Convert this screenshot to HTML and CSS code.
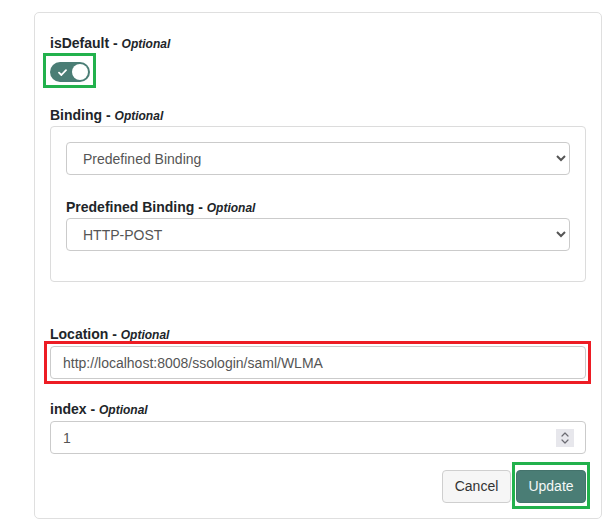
FILE: index.html
```html
<!DOCTYPE html>
<html lang="en">
<head>
<meta charset="utf-8">
<title>Edit endpoint</title>
<link rel="stylesheet" href="styles.css">
</head>
<body>
<div class="page">
  <form class="card">
    <div class="group group-default">
      <label class="field-label">isDefault - <em class="opt">Optional</em></label>
      <span class="mark mark-green mark-switch">
        <span class="switch" role="switch" aria-checked="true">
          <svg class="switch-check" width="9" height="7" viewBox="0 0 9 7"><path d="M1 3.6 L3.4 6 L8 1.2" fill="none" stroke="#fff" stroke-width="1.8" stroke-linecap="round" stroke-linejoin="round"/></svg>
          <span class="switch-knob"></span>
        </span>
      </span>
    </div>

    <div class="group group-binding">
      <label class="field-label label-flush">Binding - <em class="opt">Optional</em></label>
      <div class="subgroup">
        <select class="control">
          <option>Predefined Binding</option>
        </select>
        <div class="inner-group">
          <label class="inner-label">Predefined Binding - <em class="opt">Optional</em></label>
          <select class="control">
            <option>HTTP-POST</option>
          </select>
        </div>
      </div>
    </div>

    <div class="group group-location">
      <label class="field-label">Location - <em class="opt">Optional</em></label>
      <div class="mark mark-red mark-location">
        <input class="control" type="text" value="http://localhost:8008/ssologin/saml/WLMA">
      </div>
    </div>

    <div class="group group-index">
      <label class="field-label">index - <em class="opt">Optional</em></label>
      <div class="number-field">
        <input class="number-input" type="text" value="1">
        <span class="spinner">
          <svg width="10" height="14" viewBox="0 0 10 14"><path d="M2 5 L5 2 L8 5 M2 9 L5 12 L8 9" fill="none" stroke="#6b6b72" stroke-width="1.2" stroke-linecap="round" stroke-linejoin="round"/></svg>
        </span>
      </div>
    </div>

    <div class="actions">
      <button type="button" class="btn btn-cancel">Cancel</button>
      <span class="mark mark-green mark-update">
        <button type="button" class="btn btn-primary">Update</button>
      </span>
    </div>
  </form>
</div>
</body>
</html>
```

FILE: styles.css
```css
* {
  box-sizing: border-box;
}

body {
  margin: 0;
  background: #fff;
  font-family: "Liberation Sans", Arial, sans-serif;
  color: #212529;
}

.page {
  padding: 12px 0 0 34px;
}

.card {
  width: 568px;
  border: 1px solid #dfdfdf;
  border-radius: 5px;
  padding: 19px 15px 15px;
}

.group {
  display: flex;
  flex-direction: column;
  align-items: stretch;
}

.group-default {
  align-items: flex-start;
}

.group-binding {
  margin-top: 22px;
}

.group-location {
  margin-top: 41px;
}

.group-index {
  margin-top: 19px;
}

.field-label {
  display: block;
  font-size: 14px;
  font-weight: bold;
  line-height: 22px;
  margin-bottom: 1px;
  color: #212529;
}

.label-flush,
.group-default .field-label {
  margin-bottom: 0;
}

.opt {
  font-size: 12px;
  font-style: italic;
  line-height: 1;
}

/* annotation frames drawn around highlighted controls */
.mark {
  position: relative;
}

.mark::after {
  content: "";
  position: absolute;
  border: 3px solid;
  pointer-events: none;
}

.mark-green::after {
  border-color: #22b14c;
}

.mark-red::after {
  border-color: #ed1c24;
}

.mark-switch {
  display: block;
  margin-top: 8px;
}

.mark-switch::after {
  top: -9px;
  left: -7px;
  right: -6px;
  bottom: -6px;
}

.mark-location {
  display: block;
}

.mark-location::after {
  top: -5px;
  left: -6px;
  right: -5px;
  bottom: -5px;
}

.mark-update {
  display: block;
}

.mark-update::after {
  top: -8px;
  left: -4px;
  right: -4px;
  bottom: -6px;
}

/* toggle switch */
.switch {
  display: flex;
  align-items: center;
  justify-content: space-between;
  width: 40px;
  height: 20px;
  border-radius: 10px;
  background: #4a7d75;
  padding: 0 2px 0 8px;
}

.switch-check {
  display: block;
}

.switch-knob {
  width: 16px;
  height: 16px;
  border-radius: 50%;
  background: #fff;
}

/* nested binding box */
.subgroup {
  border: 1px solid #dcdcdc;
  border-radius: 4px;
  padding: 15px 15px 30px;
}

.inner-group {
  margin-top: 22px;
  display: flex;
  flex-direction: column;
}

.inner-label {
  font-size: 14px;
  font-weight: bold;
  line-height: 21px;
  color: #212529;
}

.control {
  display: block;
  width: 100%;
  height: 33px;
  border: 1px solid #cbcbcb;
  border-radius: 4px;
  padding: 0 12px;
  font-family: "Liberation Sans", Arial, sans-serif;
  font-size: 14px;
  color: #555;
  background: #fff;
}

.number-field {
  display: flex;
  align-items: center;
  height: 33px;
  border: 1px solid #cbcbcb;
  border-radius: 4px;
  padding: 0 11px 0 12px;
  background: #fff;
}

.number-input {
  flex: 1;
  min-width: 0;
  border: 0;
  padding: 0;
  outline: none;
  font-family: "Liberation Sans", Arial, sans-serif;
  font-size: 14px;
  color: #555;
  background: transparent;
}

.spinner {
  display: flex;
  align-items: center;
  justify-content: center;
  width: 18px;
  height: 18px;
  background: #e7e7ec;
}

/* footer buttons */
.actions {
  display: flex;
  justify-content: flex-end;
  gap: 5px;
  margin-top: 16px;
}

.btn {
  display: block;
  height: 33px;
  padding: 0;
  border-radius: 4px;
  font-family: "Liberation Sans", Arial, sans-serif;
  font-size: 14px;
  line-height: 31px;
  text-align: center;
}

.btn-cancel {
  width: 69px;
  background: #f6f6f6;
  border: 1px solid #cfcfcf;
  color: #333;
}

.btn-primary {
  width: 70px;
  background: #4a7d75;
  border: 1px solid #44736c;
  color: #f4f8f7;
}
```
